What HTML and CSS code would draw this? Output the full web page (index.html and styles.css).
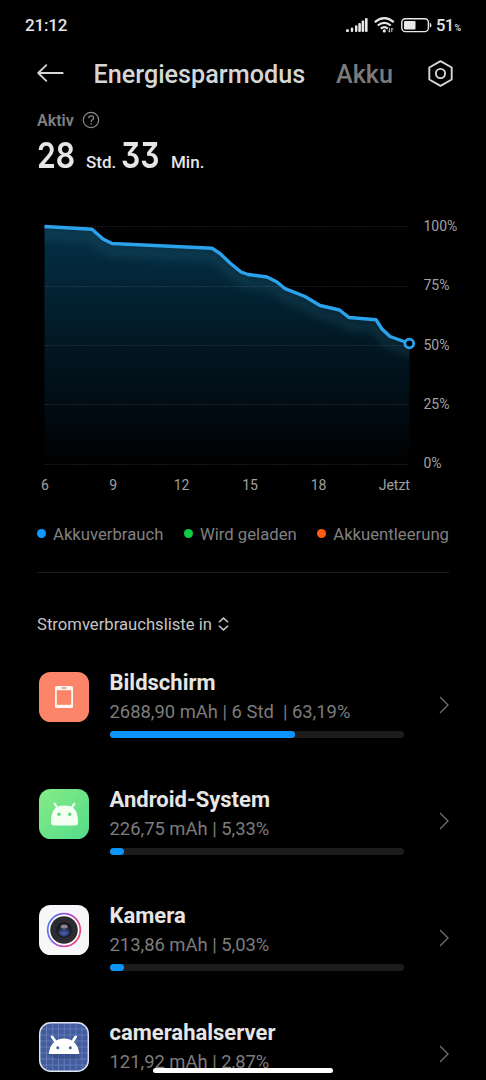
FILE: index.html
```html
<!DOCTYPE html>
<html lang="de">
<head>
    <meta charset="UTF-8">
    <meta name="viewport" content="width=device-width, initial-scale=1">
    <title>Energiesparmodus</title>
    <link rel="stylesheet" href="styles.css">
</head>
<body>
    <div class="status-bar">
        <span class="time">21:12</span>
        <div class="status-icons">
            <svg class="signal" width="22" height="14" viewBox="0 0 22 14" fill="#e8e8e8">
                <rect x="0" y="11.3" width="2.9" height="2.7" rx="1"/>
                <rect x="4.8" y="9.5" width="2.4" height="4.5" rx="1"/>
                <rect x="9" y="7.2" width="2.4" height="6.8" rx="1"/>
                <rect x="12.3" y="5" width="2.6" height="9" rx="1"/>
                <rect x="15.6" y="2.5" width="2.6" height="11.5" rx="1"/>
                <rect x="19" y="0" width="2.6" height="14" rx="1"/>
            </svg>
            <svg class="wifi" width="21" height="16" viewBox="0 0 21 16" fill="none" stroke="#e8e8e8" stroke-width="2.2">
                <path d="M.8 5.2Q10.3-2.8 19.8 5.2"/>
                <path d="M3.8 8.5Q10.3 3.2 16.8 8.5"/>
                <path d="M6.8 11.6Q10.3 8.8 13.8 11.6"/>
                <circle cx="10.3" cy="13.9" r="1.6" fill="#e8e8e8" stroke="none"/>
                <path d="M15.6 11.2v4l-1.4-1.5M17.8 15v-4l1.3 1.4" stroke-width=".9"/>
            </svg>
            <svg class="battery" width="31" height="15" viewBox="0 0 31 15">
                <rect x=".8" y=".8" width="26.6" height="12.8" rx="3.6" fill="none" stroke="#e8e8e8" stroke-width="1.4"/>
                <rect x="3" y="3" width="11.5" height="8.4" rx="1.2" fill="#e8e8e8"/>
                <path d="M28.8 4.8q1.6.3 1.6 2.4t-1.6 2.4z" fill="#e8e8e8"/>
            </svg>
            <span class="percent">51<small>%</small></span>
        </div>
    </div>

    <div class="header">
        <svg class="back" width="27" height="18" viewBox="0 0 27 18" fill="none" stroke="#d6d6d6" stroke-width="1.8" stroke-linecap="round" stroke-linejoin="round">
            <path d="M9.3 1.2L1.2 9l8.1 7.8M1.4 9h24.3"/>
        </svg>
        <h1>Energiesparmodus</h1>
        <span class="tab">Akku</span>
        <svg class="settings" width="26" height="27" viewBox="0 0 26 27" fill="none" stroke="#d6d6d6" stroke-width="1.9" stroke-linejoin="round">
            <path d="M12.5 1.2L23.7 7.5v12L12.5 25.8 1.3 19.5v-12z"/>
            <circle cx="12.5" cy="13.5" r="4.6"/>
        </svg>
    </div>

    <div class="active">
        <span>Aktiv</span>
        <svg width="18" height="18" viewBox="0 0 18 18" fill="none" stroke="#8a8a8a" stroke-width="1.2">
            <circle cx="9" cy="9" r="7.7"/>
            <path d="M6.7 7.2q0-2.4 2.4-2.4t2.4 2.1q0 1.2-1.2 1.9T9.1 10.9M9.1 12v1.5"/>
        </svg>
    </div>
    <div class="duration">
        <b>28</b><span class="hours">Std.</span><b>33</b><span>Min.</span>
    </div>

    <svg class="chart" width="486" height="300" viewBox="0 200 486 300">
        <defs>
            <linearGradient id="area" gradientUnits="userSpaceOnUse" x1="0" y1="226" x2="0" y2="464">
                <stop offset="0" stop-color="#053047"/>
                <stop offset=".25" stop-color="#032536"/>
                <stop offset=".5" stop-color="#021722"/>
                <stop offset=".75" stop-color="#010c14"/>
                <stop offset="1" stop-color="#000"/>
            </linearGradient>
            <filter id="soft" x="-10%" y="-20%" width="120%" height="150%">
                <feGaussianBlur stdDeviation="4"/>
            </filter>
            <clipPath id="under">
                <path d="M44.5 226.5L92 229.3 103 239 112 243.5 212 248.3 220 253.5 230 263 241 272 248 274.5 267 277 277 282 285 288.7 305 296.5 320 305.5 339.5 310 349 317.5 376 319.8 382 329 390 336.5 409.5 343.5V464H44.5z"/>
            </clipPath>
        </defs>
        <g clip-path="url(#under)">
            <rect x="44" y="220" width="366" height="245" fill="url(#area)"/>
            <path class="glow" filter="url(#soft)" d="M34 234L92 237 103 247 112 251.5 212 256.3 220 261.5 230 271 241 280 248 282.5 267 285 277 290 285 296.7 305 304.5 320 313.5 339.5 318 349 325.5 376 327.8 382 337 390 344.5 415 352"/>
        </g>
        <path class="grid" d="M44.5 226.5H409M44.5 286.5H409M44.5 345.5H409M44.5 404.5H409M44.5 464.5H409"/>
        <path class="line" d="M44.5 226.5L92 229.3 103 239 112 243.5 212 248.3 220 253.5 230 263 241 272 248 274.5 267 277 277 282 285 288.7 305 296.5 320 305.5 339.5 310 349 317.5 376 319.8 382 329 390 336.5 409.5 343.5"/>
        <circle class="dot" cx="409.3" cy="343.5" r="4.4"/>
        <g class="axis">
            <text x="423.5" y="230.5">100%</text>
            <text x="423.5" y="290">75%</text>
            <text x="423.5" y="349.5">50%</text>
            <text x="423.5" y="408.8">25%</text>
            <text x="423.5" y="468">0%</text>
        </g>
        <g class="axis middle">
            <text x="45" y="490.4">6</text>
            <text x="113.3" y="490.4">9</text>
            <text x="181.6" y="490.4">12</text>
            <text x="250" y="490.4">15</text>
            <text x="318.5" y="490.4">18</text>
            <text x="394.3" y="490.4">Jetzt</text>
        </g>
    </svg>

    <div class="legend">
        <span class="used">Akkuverbrauch</span>
        <span class="charging">Wird geladen</span>
        <span class="drained">Akkuentleerung</span>
    </div>

    <div class="list-title">
        <span>Stromverbrauchsliste in</span>
        <svg width="11" height="14" viewBox="0 0 11 14" fill="none" stroke="#c4c4c4" stroke-width="1.5">
            <path d="M.9 5.3L5.5 1.1l4.6 4.2M.9 8.7l4.6 4.2 4.6-4.2"/>
        </svg>
    </div>

    <div class="list">
        <div class="item">
            <svg class="icon" viewBox="0 0 50 50">
                <rect width="50" height="50" rx="11.5" fill="#fb8469"/>
                <path d="M17.5 14h15a1.5 1.5 0 0 1 1.5 1.5v19a1.5 1.5 0 0 1-1.5 1.5h-15a1.5 1.5 0 0 1-1.5-1.5v-19a1.5 1.5 0 0 1 1.5-1.5z" fill="#fff8f3"/>
                <rect x="17.8" y="18.2" width="14.4" height="14.6" fill="#fb8469"/>
                <rect x="22.5" y="15.2" width="5" height="1.5" rx=".7" fill="#e58b75"/>
            </svg>
            <div class="info">
                <h2>Bildschirm</h2>
                <p>2688,90 mAh | 6 Std&nbsp; | 63,19%</p>
                <div class="bar"><div class="fill" style="width: 63.19%"></div></div>
            </div>
            <svg class="arrow" viewBox="0 0 10 18"><path d="M1 1l8 8-8 8"/></svg>
        </div>

        <div class="item">
            <svg class="icon" viewBox="0 0 50 50">
                <defs>
                    <linearGradient id="green" x1="0" y1="0" x2="1" y2="1">
                        <stop offset="0" stop-color="#86ec86"/>
                        <stop offset="1" stop-color="#54db8b"/>
                    </linearGradient>
                </defs>
                <rect width="50" height="50" rx="11.5" fill="url(#green)"/>
                <path d="M12 33.5C12 22 15.500 16.500 25.500 16.500S39 22 39 33.500a3 3 0 0 1-3 3H15a3 3 0 0 1-3-3z" fill="#f4fff3"/>
                <path d="M18.500 19l-2.700-4.200M32.500 19l2.700-4.200" stroke="#f4fff3" stroke-width="2.200" stroke-linecap="round"/>
                <circle cx="20" cy="25.300" r="1.700" fill="#5cdb83"/>
                <circle cx="30.700" cy="25.300" r="1.700" fill="#5cdb83"/>
            </svg>
            <div class="info">
                <h2>Android-System</h2>
                <p>226,75 mAh | 5,33%</p>
                <div class="bar"><div class="fill" style="width: 5.1%"></div></div>
            </div>
            <svg class="arrow" viewBox="0 0 10 18"><path d="M1 1l8 8-8 8"/></svg>
        </div>

        <div class="item">
            <svg class="icon" viewBox="0 0 50 50">
                <defs>
                    <linearGradient id="ring" x1="0" y1=".3" x2="1" y2=".7">
                        <stop offset="0" stop-color="#4a78f0"/>
                        <stop offset=".5" stop-color="#b04bd0"/>
                        <stop offset="1" stop-color="#f0406e"/>
                    </linearGradient>
                    <radialGradient id="lens" cx=".5" cy=".7" r=".6">
                        <stop offset="0" stop-color="#3f64a8"/>
                        <stop offset=".6" stop-color="#252b4c"/>
                        <stop offset="1" stop-color="#15161f"/>
                    </radialGradient>
                </defs>
                <rect width="50" height="50" rx="11.5" fill="#f7f7fa"/>
                <circle cx="25" cy="25" r="16.3" fill="#fff" stroke="url(#ring)" stroke-width="1.7"/>
                <circle cx="25" cy="25" r="13.8" fill="#2b2c31"/>
                <circle cx="25" cy="25" r="7.3" fill="url(#lens)" stroke="#15161d"/>
                <ellipse cx="25.2" cy="21.5" rx="3.5" ry="2" fill="#8f8291"/>
                <path d="M20.5 27q4.500 4 9 0" fill="none" stroke="#455ba3" stroke-width="1.2"/>
            </svg>
            <div class="info">
                <h2>Kamera</h2>
                <p>213,86 mAh | 5,03%</p>
                <div class="bar"><div class="fill" style="width: 5.1%"></div></div>
            </div>
            <svg class="arrow" viewBox="0 0 10 18"><path d="M1 1l8 8-8 8"/></svg>
        </div>

        <div class="item">
            <svg class="icon" viewBox="0 0 50 50">
                <rect x=".7" y=".7" width="48.6" height="48.6" rx="11" fill="#415c9f"/>
                <path d="M7.5 1v48M13.7 1v48M19.5 1v48M25.3 1v48M31 1v48M37 1v48M43 1v48M1 7h48M1 13h48M1 19h48M1 25h48M1 31h48M1 37h48M1 43h48" stroke="#6c82b8" stroke-width=".8"/>
                <path d="M10 32l6 5h24V32z" fill="#2f477f" opacity=".5"/>
                <path d="M9.8 32C10.500 22 17 16.500 25 16.500S39.500 22 40.300 32z" fill="#fff"/>
                <path d="M17 20l-4-5.200M33.200 20l3.500-5.200" stroke="#fff" stroke-width="2.600" stroke-linecap="round"/>
                <circle cx="18.8" cy="25.8" r="1.5" fill="#415c9f"/>
                <circle cx="31.3" cy="25.8" r="1.5" fill="#415c9f"/>
                <rect x=".7" y=".7" width="48.6" height="48.6" rx="11" fill="none" stroke="#dfe5f2" stroke-width="1.4"/>
            </svg>
            <div class="info">
                <h2>camerahalserver</h2>
                <p>121,92 mAh | 2,87%</p>
                <div class="bar"><div class="fill" style="width: 5.1%"></div></div>
            </div>
            <svg class="arrow" viewBox="0 0 10 18"><path d="M1 1l8 8-8 8"/></svg>
        </div>
    </div>

    <div class="home-bar"></div>
</body>
</html>
```
FILE: styles.css
```css
body {
    font-family: Roboto, sans-serif;
    background-color: #000;
    color: #e6e6e6;
    margin: 0;
    height: 1080px;
    overflow: hidden;
    position: relative;
}

svg {
    display: block;
    flex: none;
}

h1, h2, p {
    margin: 0;
}

.status-bar {
    display: flex;
    justify-content: space-between;
    align-items: center;
    height: 50px;
    padding: 0 25px;
    font-size: 17px;
    font-weight: 500;
}

.time {
    letter-spacing: -.2px;
}

.status-icons {
    display: flex;
    align-items: center;
}

.wifi {
    margin-left: 6px;
}

.battery {
    margin-left: 6px;
}

.percent {
    width: 25px;
    margin-left: 4px;
    font-size: 16.5px;
    letter-spacing: -.6px;
    white-space: nowrap;
}

.percent small {
    margin-left: 1px;
    font-size: 9px;
}

.header {
    display: flex;
    align-items: center;
    height: 46px;
    padding-left: 37px;
}

.header h1, .tab {
    font-size: 25.2px;
    line-height: 30px;
    font-weight: 500;
    color: #d6d6d6;
    padding-top: 3px;
}

.header h1 {
    width: 212px;
    margin-left: 29.5px;
}

.header .tab {
    color: #7a7a7a;
    width: 56px;
    margin-left: 30.5px;
}

.settings {
    margin-left: 36px;
}

.active {
    display: flex;
    align-items: center;
    gap: 8px;
    height: 20px;
    margin-top: 14px;
    padding-left: 37px;
    font-size: 16px;
    font-weight: 600;
    color: #808080;
}

.active svg {
    margin-top: -1px;
}

.duration {
    display: flex;
    align-items: baseline;
    height: 44px;
    margin-top: 3px;
    padding-left: 37px;
    font-size: 17px;
    font-weight: 500;
}

/* große Ziffern mit flacher Drei */
.duration b {
    font-family: Inter, sans-serif;
    font-feature-settings: "cv09";
    font-size: 36px;
    line-height: 44px;
    font-weight: 600;
    width: 49px;
    transform: scaleX(.84);
    transform-origin: left;
}

.duration .hours {
    width: 35px;
}

.duration b + span:last-child {
    margin-left: 1px;
}

.chart {
    margin-top: 23px;
}

.grid {
    stroke: #fff;
    stroke-opacity: .17;
    stroke-dasharray: 1 1.5;
}

.line {
    fill: none;
    stroke: #2aa3ec;
    stroke-width: 3.4;
    stroke-linejoin: round;
}

.glow {
    fill: none;
    stroke: #2c6c85;
    stroke-opacity: .25;
    stroke-width: 9;
}

.dot {
    fill: #000;
    stroke: #2aa3ec;
    stroke-width: 2.8;
}

.axis {
    font-size: 14px;
    fill: #a0a0a0;
}

.middle {
    text-anchor: middle;
}

.legend {
    display: flex;
    justify-content: space-between;
    height: 72px;
    margin: 0 37px;
    border-bottom: 1px solid #1c1c1c;
    font-size: 16.7px;
    color: #808080;
}

.legend span {
    display: flex;
    align-items: center;
    height: 69px;
}

.legend span::before {
    content: "";
    width: 9px;
    height: 9px;
    margin: 0 7px 2px 0;
    border-radius: 50%;
    background-color: #0d99ff;
}

.legend .charging::before {
    background-color: #10cc46;
}

.legend .drained::before {
    background-color: #ff5c10;
}

.list-title {
    display: flex;
    align-items: center;
    gap: 6px;
    height: 24px;
    margin-top: 39px;
    padding-left: 37px;
    font-size: 16.65px;
    color: #c4c4c4;
}

.item {
    display: flex;
    height: 80.5px;
    padding: 36px 37px 0 39px;
}

.icon {
    width: 50px;
    height: 50px;
}

.info {
    width: 294px;
    margin-left: 20.500px;
}

.info h2 {
    font-size: 22px;
    line-height: 26px;
    margin-top: -2px;
    font-weight: 700;
    color: #e6e6e6;
    white-space: nowrap;
}

.info p {
    font-size: 18.4px;
    line-height: 22px;
    margin-top: 5px;
    color: #7c7c7c;
    white-space: nowrap;
}

.bar {
    height: 7px;
    margin-top: 8px;
    border-radius: 4px;
    background-color: #1c1c1c;
}

.fill {
    height: 7px;
    border-radius: 4px;
    background-color: #0d94fb;
}

.arrow {
    width: 10px;
    height: 18px;
    margin: 23.5px 0 0 auto;
    fill: none;
    stroke: #707070;
    stroke-width: 1.3;
}

.home-bar {
    position: absolute;
    left: 153px;
    bottom: 7px;
    width: 180px;
    height: 5px;
    border-radius: 3px;
    background-color: #fff;
}
```
